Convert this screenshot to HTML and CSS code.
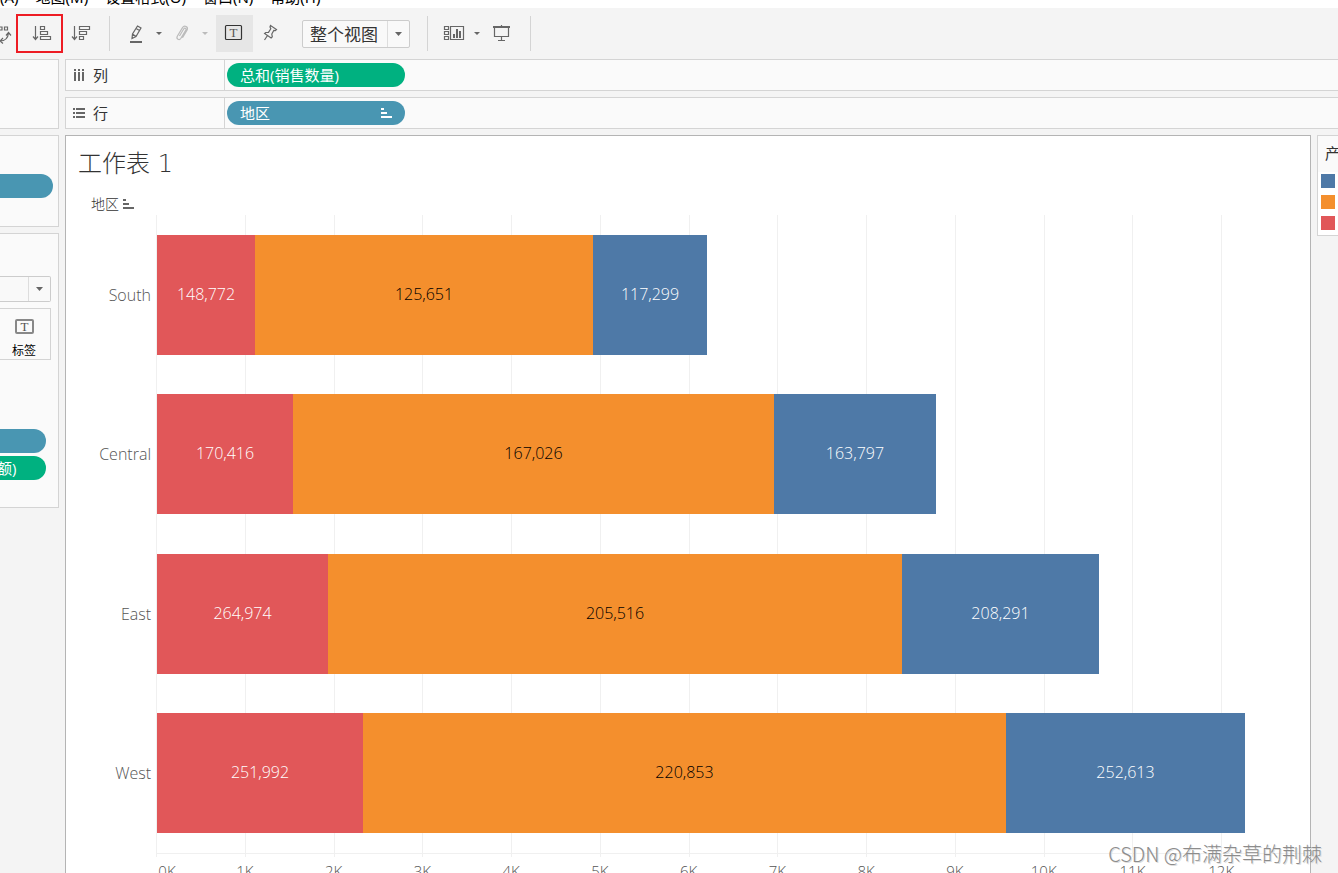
FILE: index.html
```html
<!DOCTYPE html>
<html lang="zh-CN">
<head>
<meta charset="utf-8">
<title>工作表 1</title>
<link rel="stylesheet" href="styles.css">
</head>
<body>
<nav class="menubar" aria-label="菜单">
  <a href="#">(A)</a><a href="#">地图(M)</a><a href="#">设置格式(O)</a><a href="#">窗口(N)</a><a href="#">帮助(H)</a>
</nav>
<header class="toolbar">
  <button class="tool tool-swap" aria-label="交换行和列"><svg class="icon icon-swap" viewBox="0 0 16 25"><path d="M-1 6h3v3h-3zM4.500 6h3v3h-3zM0 20c5 0 8-3 8.500-8M6 14.500l2.500-3 2.500 3M3 17l-3 3 3 2.500"/></svg></button>
  <button class="tool tool-marked" aria-label="升序排序"><svg class="icon" viewBox="0 0 25 25"><path d="M8.500 5v13.500M6 15.500l2.500 3 2.500-3M13.500 5.500h4v3h-4zM13.500 10.500h7v3h-7zM13.500 15.500h10v3h-10z"/></svg></button>
  <button class="tool" aria-label="降序排序"><svg class="icon" viewBox="0 0 25 25"><path d="M5.500 5v13.500M3 15.500l2.500 3 2.500-3M10.500 5.500h10v3h-10zM10.500 10.500h7v3h-7zM10.500 15.500h4v3h-4z"/></svg></button>
  <i class="sep"></i>
  <button class="tool tool-mid" aria-label="突出显示"><svg class="icon" viewBox="0 0 25 25"><path d="M13.500 5l3.500 2-5 8.500-4 2 .500-4.500zM12 7.500l3.500 2M8.500 13l3.500 2.500"/><path class="thick" d="M6 21h12"/></svg></button>
  <button class="caret" aria-label="突出显示选项"><svg viewBox="0 0 6 3"><path d="M0 0h6L3 3z"/></svg></button>
  <button class="tool tool-clip" aria-label="组成员" disabled><svg class="icon" viewBox="0 0 25 25"><path d="M10.500 15l4.200-7c1-1.600 3-.500 2.100 1.100l-4.900 8.200c-1.600 2.500-5 .600-3.600-2l5.200-8.700c2-3 6.200-.600 4.500 2.600l-4.500 7.500"/></svg></button>
  <button class="caret" aria-label="组选项" disabled><svg viewBox="0 0 6 3"><path d="M0 0h6L3 3z"/></svg></button>
  <button class="tool tool-on" aria-label="显示标记标签"><svg class="icon icon-dark" viewBox="0 0 25 25"><rect x="3.500" y="4.500" width="16" height="14" rx="1"/><text x="11.500" y="16">T</text></svg></button>
  <button class="tool tool-pin" aria-label="固定轴"><svg class="icon" viewBox="0 0 25 25"><path d="M12.500 4.500l6 4-1.200 1.200-1.500-.200-2 3.500.500 2.800-1.200 1.200-6.500-4.500 1.200-1 2.700-.200 2.300-3.500-.800-1.800zM9.500 14.500L6.500 19"/></svg></button>
  <span class="picker fit">
    <select aria-label="适合"><option>整个视图</option></select>
    <svg viewBox="0 0 7 4"><path d="M0 0h7L3.500 4z"/></svg>
  </span>
  <i class="sep sep-wide"></i>
  <button class="tool tool-mid" aria-label="显示/隐藏卡"><svg class="icon" viewBox="0 0 25 25"><path d="M2.500 5.500h4v3h-4zM2.500 10.500h4v3h-4zM2.500 15.500h4v3h-4zM8.500 5.500h13v13h-13z"/><path class="fill" d="M11 13h2v4h-2zM14 8h2v9h-2zM17 10h2v7h-2z"/></svg></button>
  <button class="caret" aria-label="卡选项"><svg viewBox="0 0 6 3"><path d="M0 0h6L3 3z"/></svg></button>
  <button class="tool tool-show" aria-label="演示模式"><svg class="icon" viewBox="0 0 25 25"><path d="M5.500 6v9.500h14V6M12.500 15.500v4M9 19.500h7M12.500 4v2"/><path class="thick" d="M4 6h17"/></svg></button>
  <i class="sep"></i>
</header>
<div class="workspace">
  <aside class="side">
    <section class="card card-pages"></section>
    <section class="card card-filters"><button class="pill pill-dim" aria-label="筛选器"></button></section>
    <section class="card card-marks">
      <span class="picker mark-type">
        <select aria-label="标记类型"><option></option></select>
        <svg viewBox="0 0 7 4"><path d="M0 0h7L3.500 4z"/></svg>
      </span>
      <button class="mark-label">
        <svg class="icon" viewBox="0 0 25 25"><rect x="4" y="6" width="17" height="13" rx="1"/><text x="12.500" y="17">T</text></svg>
        标签
      </button>
      <button class="pill pill-dim" aria-label="颜色"></button>
      <button class="pill pill-measure">额)</button>
    </section>
  </aside>
  <main class="content">
    <section class="shelf">
      <h2><svg viewBox="0 0 12 12"><path d="M1 0h2v2H1zM5 0h2v2H5zM9 0h2v2H9zM1 3h2v9H1zM5 3h2v9H5zM9 3h2v9H9z"/></svg>列</h2>
      <button class="pill pill-measure">总和(销售数量)</button>
    </section>
    <section class="shelf">
      <h2><svg viewBox="0 0 12 12"><path d="M0 1h2v2H0zM0 5h2v2H0zM0 9h2v2H0zM3 1h9v2H3zM3 5h9v2H3zM3 9h9v2H3z"/></svg>行</h2>
      <button class="pill pill-dim">地区<svg class="sorted" viewBox="0 0 11 10"><path d="M0 0h3v2H0zM0 4h6v2H0zM0 8h11v2H0z"/></svg></button>
    </section>
    <div class="stage">
      <section class="view">
        <h1>工作表 1</h1>
        <p class="field">地区<svg class="sorted" viewBox="0 0 11 10"><path d="M0 0h3v2H0zM0 4h6v2H0zM0 8h11v2H0z"/></svg></p>
        <div class="chart">
          <div class="gridlines"><i></i><i></i><i></i><i></i><i></i><i></i><i></i><i></i><i></i><i></i><i></i><i></i><i></i></div>
          <div class="rows">
            <div class="row"><span class="name">South</span><div class="bar"><span class="red" style="width:8.500%">148,772</span><span class="orange" style="width:29.315%">125,651</span><span class="blue" style="width:9.887%">117,299</span></div></div>
            <div class="row"><span class="name">Central</span><div class="bar"><span class="red" style="width:11.795%">170,416</span><span class="orange" style="width:41.717%">167,026</span><span class="blue" style="width:14.050%">163,797</span></div></div>
            <div class="row"><span class="name">East</span><div class="bar"><span class="red" style="width:14.831%">264,974</span><span class="orange" style="width:49.783%">205,516</span><span class="blue" style="width:17.086%">208,291</span></div></div>
            <div class="row"><span class="name">West</span><div class="bar"><span class="red" style="width:17.866%">251,992</span><span class="orange" style="width:55.768%">220,853</span><span class="blue" style="width:20.729%">252,613</span></div></div>
          </div>
          <div class="axis"><span>0K</span><span>1K</span><span>2K</span><span>3K</span><span>4K</span><span>5K</span><span>6K</span><span>7K</span><span>8K</span><span>9K</span><span>10K</span><span>11K</span><span>12K</span></div>
        </div>
      </section>
      <aside class="legend">
        <h2>产</h2>
        <i class="blue"></i><i class="orange"></i><i class="red"></i>
      </aside>
    </div>
  </main>
</div>
<div class="watermark">CSDN @布满杂草的荆棘</div>
</body>
</html>
```

FILE: styles.css
```css
* { box-sizing: border-box; }

body {
  margin: 0;
  height: 100vh;
  overflow: hidden;
  position: relative;
  background: #f4f4f4;
  color: #333;
  font: 15px/20px "Open Sans", "Noto Sans CJK SC", sans-serif;
}

button, select {
  margin: 0;
  padding: 0;
  border: 0;
  background: none;
  color: inherit;
  font: inherit;
}

h1, h2, p { margin: 0; font-weight: 400; }

/* Menu and toolbar */
.menubar {
  display: flex;
  align-items: flex-end;
  gap: 17px;
  height: 8px;
  overflow: hidden;
  background: #fff;
}
.menubar a {
  flex: none;
  color: #000;
  font-family: "Noto Sans", "Noto Sans CJK SC", sans-serif;
  line-height: 22px;
  text-decoration: none;
  white-space: nowrap;
}

.toolbar {
  display: flex;
  align-items: center;
  height: 51px;
}
.tool {
  display: flex;
  flex: none;
  align-items: center;
  justify-content: center;
  width: 37px;
  height: 37px;
}
.tool-swap { width: 16px; }
.tool-marked { width: 47px; height: 39px; border: 2px solid #ed1c24; }
.tool-mid { width: 33px; }
.tool-clip { width: 35px; }
.tool-on { margin-left: 6px; background: #e6e6e6; }
.tool-pin { width: 35px; }
.tool-show { width: 39px; }

.icon {
  flex: none;
  width: 25px;
  height: 25px;
  fill: none;
  stroke: #666;
  stroke-width: 1.2;
}
.icon-swap { width: 16px; }
.icon .thick { stroke-width: 2; }
.icon .fill { fill: #666; stroke: none; }
.icon text {
  fill: #555;
  stroke: none;
  font: 13px "Liberation Serif", serif;
  text-anchor: middle;
}
.icon-dark { stroke: #333; }
.tool:disabled .icon { stroke: #bbb; }

.caret {
  display: flex;
  flex: none;
  align-items: center;
  justify-content: center;
  width: 11px;
  height: 37px;
}
.caret svg { width: 6px; height: 3px; fill: #666; }
.caret:disabled svg { fill: #bbb; }

.sep {
  flex: none;
  width: 1px;
  height: 35px;
  margin: 0 10px 0 9px;
  background: #d4d4d4;
}
.sep-wide { margin-left: 17px; }

.picker {
  position: relative;
  display: block;
  flex: none;
}
.picker select {
  appearance: none;
  display: block;
  width: 100%;
  height: 100%;
  border: 1px solid #ccc;
  border-radius: 2px;
  background: linear-gradient(#ddd, #ddd) right 21px top / 1px 100% no-repeat #f9f9f9;
}
.picker svg {
  position: absolute;
  top: 50%;
  right: 8px;
  width: 7px;
  height: 4px;
  margin-top: -2px;
  fill: #666;
  pointer-events: none;
}
.fit { width: 108px; height: 28px; margin-left: 14px; }
.picker.fit select { padding: 2px 0 0 7px; font-size: 17px; }

/* Side cards */
.workspace { display: flex; gap: 6px; }
.side {
  display: flex;
  flex: none;
  flex-direction: column;
  gap: 6px;
  width: 59px;
}
.card {
  border: 1px solid #d4d4d4;
  border-left: 0;
  background: #fafafa;
}
.card-pages { height: 70px; }
.card-filters { padding: 38px 5px 28px 0; }
.card-marks {
  display: flex;
  flex-direction: column;
  padding: 42px 7px 27px 0;
}
.mark-type { height: 26px; }
.mark-type select { border-left: 0; border-radius: 0 2px 2px 0; }
.mark-label {
  display: flex;
  flex-direction: column;
  align-items: center;
  height: 52px;
  margin: 6px 0 69px;
  padding: 5px 2px 0 0;
  border: 1px solid #d4d4d4;
  border-left: 0;
  color: #000;
  font-size: 12px;
  line-height: 24px;
}
.mark-label .icon { stroke: #888; stroke-width: 2; }

.pill {
  display: flex;
  align-items: center;
  width: 178px;
  height: 24px;
  padding: 0 13px;
  border-radius: 12px;
  color: #fff;
}
.pill-dim { background: #4996b2; }
.pill-measure { background: #00b180; }
.side .pill { width: 100%; border-radius: 0 12px 12px 0; padding: 0; text-indent: -3px; }
.card-marks .pill { width: 46px; margin-bottom: 3px; }
.card-marks .pill:last-child { margin-bottom: 0; }
.sorted { width: 11px; height: 10px; fill: #666; }
.pill .sorted { margin-left: auto; fill: #fff; }

/* Shelves */
.content {
  display: flex;
  flex: 1;
  flex-direction: column;
  gap: 6px;
  min-width: 0;
}
.shelf {
  display: flex;
  align-items: center;
  gap: 2px;
  height: 32px;
  border: 1px solid #d4d4d4;
  border-right: 0;
  background: #fafafa;
}
.shelf h2 {
  display: flex;
  align-items: center;
  align-self: stretch;
  gap: 8px;
  width: 159px;
  padding-left: 7px;
  border-right: 1px solid #d4d4d4;
  font-size: 15px;
}
.shelf h2 svg { width: 12px; height: 12px; fill: #666; }

/* Worksheet */
.stage { display: flex; align-items: flex-start; gap: 6px; }
.view {
  flex: 1;
  min-width: 0;
  border: 1px solid #b4b4b4;
  background: #fff;
}
.view h1 {
  padding: 10px 12px 0;
  font: 200 24px/36px "DejaVu Sans", "Noto Sans CJK SC", sans-serif;
}
.field {
  display: flex;
  align-items: center;
  gap: 4px;
  padding: 12px 25px 1px;
  font-size: 14px;
  font-weight: 300;
}
.chart { position: relative; }
.gridlines {
  position: absolute;
  top: 0;
  right: 0;
  left: 90px;
  display: grid;
  grid-template-columns: repeat(13, 1fr);
  height: 642px;
}
.gridlines i { border-left: 1px solid #f0f0f0; }
.rows {
  position: relative;
  display: grid;
  grid-template-rows: repeat(4, 1fr);
  min-height: 638px;
  font-size: 16px;
}
.row {
  display: grid;
  grid-template-columns: 90px 1fr;
  align-items: center;
}
.name {
  padding-right: 5px;
  color: #555;
  font-weight: 300;
  text-align: right;
}
.bar { display: flex; height: 120px; padding-left: 1px; }
.bar span {
  display: flex;
  align-items: center;
  justify-content: center;
  padding-bottom: 2px;
  font-weight: 300;
}
.red { background: #e15759; color: #fff; }
.orange { background: #f48f2d; color: #000; }
.blue { background: #4e79a7; color: #fff; }
.axis {
  position: relative;
  display: grid;
  grid-template-columns: repeat(13, 1fr);
  margin-left: 90px;
  padding: 7px 0 12px;
  border-top: 1px solid #f0f0f0;
  color: #555;
  font-weight: 300;
}
.axis span { width: 40px; margin-left: -20px; text-align: center; }
.axis span:first-child { margin-left: -9px; }

.legend {
  display: flex;
  flex: none;
  flex-direction: column;
  gap: 7px;
  width: 21px;
  padding: 0 0 5px 3px;
  border: 1px solid #d4d4d4;
  border-right: 0;
  background: #fff;
  overflow: hidden;
}
.legend h2 {
  margin: 0 0 -5px -3px;
  padding: 7px 0 9px 7px;
  background: #fafafa;
  font-size: 15px;
}
.legend i { width: 14px; height: 14px; }

.watermark {
  position: absolute;
  right: 16px;
  bottom: 4px;
  color: #8c8c8c;
  font: 300 20px/30px "Noto Sans CJK SC", sans-serif;
  text-shadow: 1px 1px 0 #ddd;
}
```
